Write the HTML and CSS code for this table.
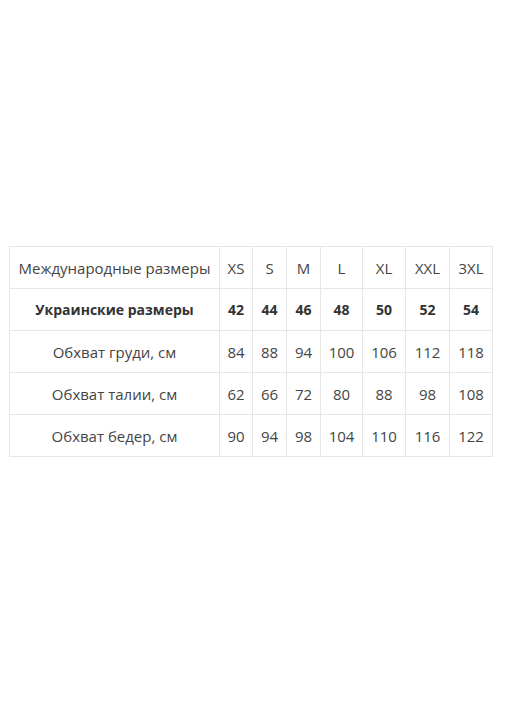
FILE: index.html
```html
<!DOCTYPE html>
<html lang="ru">
<head>
<meta charset="utf-8">
<title>Таблица размеров</title>
<link rel="stylesheet" href="styles.css">
</head>
<body>
<div class="page">
<table class="sizes">
<colgroup>
<col class="c-label"><col class="c-xs"><col class="c-s"><col class="c-m"><col class="c-l"><col class="c-xl"><col class="c-xxl"><col class="c-3xl">
</colgroup>
<tbody>
<tr><td>Международные размеры</td><td>XS</td><td>S</td><td>M</td><td>L</td><td>XL</td><td>XXL</td><td>3XL</td></tr>
<tr class="bold"><td>Украинские размеры</td><td>42</td><td>44</td><td>46</td><td>48</td><td>50</td><td>52</td><td>54</td></tr>
<tr><td>Обхват груди, см</td><td>84</td><td>88</td><td>94</td><td>100</td><td>106</td><td>112</td><td>118</td></tr>
<tr><td>Обхват талии, см</td><td>62</td><td>66</td><td>72</td><td>80</td><td>88</td><td>98</td><td>108</td></tr>
<tr><td>Обхват бедер, см</td><td>90</td><td>94</td><td>98</td><td>104</td><td>110</td><td>116</td><td>122</td></tr>
</tbody>
</table>
</div>
</body>
</html>
```
FILE: styles.css
```css
html, body {
  margin: 0;
  padding: 0;
  background: #ffffff;
}
.page {
  padding: 246px 0 0 9px;
}
.sizes {
  border-collapse: collapse;
  table-layout: fixed;
  width: 483px;
  font-family: "Open Sans", "Liberation Sans", sans-serif;
  font-size: 15px;
  color: #444444;
}
.c-label { width: 210px; }
.c-xs { width: 33px; }
.c-s { width: 34px; }
.c-m { width: 34px; }
.c-l { width: 42px; }
.c-xl { width: 43px; }
.c-xxl { width: 44px; }
.c-3xl { width: 43px; }
.sizes td {
  border: 1px solid #e6e6e6;
  height: 41px;
  padding: 0;
  text-align: center;
  vertical-align: middle;
  white-space: nowrap;
}
.sizes .bold td {
  font-weight: 700;
  font-size: 14px;
  color: #333333;
}
```
